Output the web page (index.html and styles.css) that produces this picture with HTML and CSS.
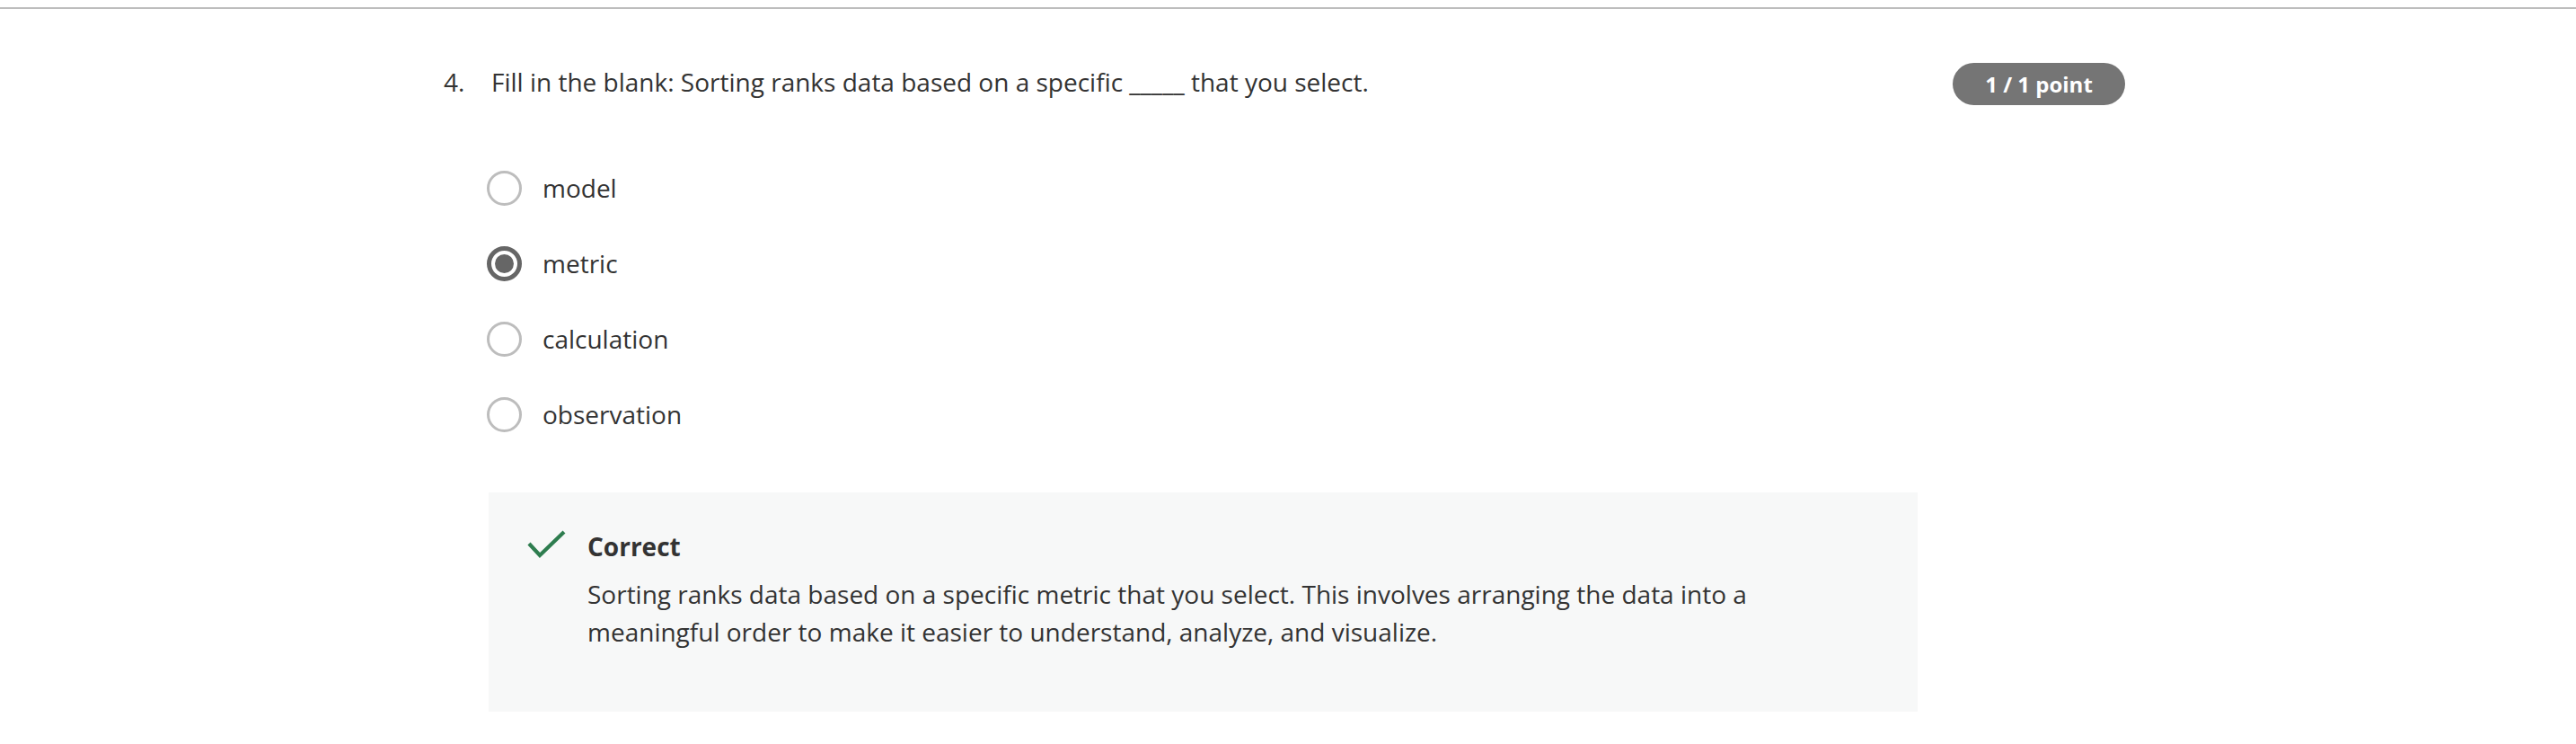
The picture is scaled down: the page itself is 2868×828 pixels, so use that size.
FILE: index.html
```html
<!DOCTYPE html>
<html lang="en">
<head>
<meta charset="utf-8">
<title>Quiz question</title>
<link rel="stylesheet" href="styles.css">
</head>
<body>
<div class="topbar"></div>
<main class="quiz">
  <div class="question">
    <div class="q-main">
      <span class="q-num">4.</span>
      <div class="q-body">
        <p class="q-text">Fill in the blank: Sorting ranks data based on a specific _____ that you select.</p>
        <ul class="options">
          <li class="option"><span class="radio"></span><span class="opt-label">model</span></li>
          <li class="option"><span class="radio checked"></span><span class="opt-label">metric</span></li>
          <li class="option"><span class="radio"></span><span class="opt-label">calculation</span></li>
          <li class="option"><span class="radio"></span><span class="opt-label">observation</span></li>
        </ul>
        <div class="feedback">
          <svg class="check" width="44" height="34" viewBox="0 0 44 34" aria-hidden="true">
            <polyline points="2,16 14,29 41,3" fill="none" stroke="#2e7d4f" stroke-width="4.2"/>
          </svg>
          <div class="fb-text">
            <div class="fb-title">Correct</div>
            <p class="fb-body">Sorting ranks data based on a specific metric that you select. This involves arranging the data into a meaningful order to make it easier to understand, analyze, and visualize.</p>
          </div>
        </div>
      </div>
    </div>
    <div class="badge">1 / 1 point</div>
  </div>
</main>
</body>
</html>
```
FILE: styles.css
```css
html, body {
  margin: 0;
  padding: 0;
  background: #ffffff;
}
body {
  font-family: "Open Sans", "Noto Sans", sans-serif;
  color: #333333;
}
.topbar {
  margin-top: 8px;
  height: 2px;
  background: #bdbdbd;
}
.quiz {
  width: 1872px;
  margin: 0 0 0 494px;
  padding-top: 60px;
}
.question {
  display: flex;
  justify-content: space-between;
  align-items: flex-start;
}
.q-main {
  display: flex;
  align-items: flex-start;
}
.q-num {
  width: 53px;
  font-size: 28px;
  line-height: 42px;
  flex-shrink: 0;
}
.q-body {
  display: flex;
  flex-direction: column;
}
.q-text {
  margin: 0;
  font-size: 28px;
  line-height: 42px;
}
.options {
  list-style: none;
  margin: 55px 0 0 -5px;
  padding: 0;
}
.option {
  display: flex;
  align-items: center;
  height: 84px;
  gap: 23px;
}
.radio {
  box-sizing: border-box;
  width: 39px;
  height: 39px;
  border-radius: 50%;
  border: 3px solid #bdbdbd;
  background: #fff;
  display: flex;
  align-items: center;
  justify-content: center;
}
.radio.checked {
  border: 5px solid #666666;
}
.radio.checked::after {
  content: "";
  width: 21px;
  height: 21px;
  border-radius: 50%;
  background: #666666;
}
.opt-label {
  font-size: 28px;
  line-height: 42px;
}
.feedback {
  margin-top: 45px;
  margin-left: -3px;
  width: 1591px;
  box-sizing: border-box;
  background: #f7f8f8;
  padding: 39px 43px 68px 43px;
  display: flex;
  align-items: flex-start;
  gap: 23px;
}
.check {
  flex-shrink: 0;
  margin-top: 2px;
}
.fb-text {
  width: 1420px;
}
.fb-title {
  font-size: 28px;
  font-weight: 700;
  line-height: 42px;
}
.fb-body {
  margin: 11px 0 0 0;
  font-size: 28px;
  line-height: 42px;
}
.badge {
  height: 47px;
  width: 192px;
  border-radius: 24px;
  background: #757575;
  color: #ffffff;
  font-weight: 700;
  font-size: 24px;
  display: flex;
  align-items: center;
  justify-content: center;
}
```
